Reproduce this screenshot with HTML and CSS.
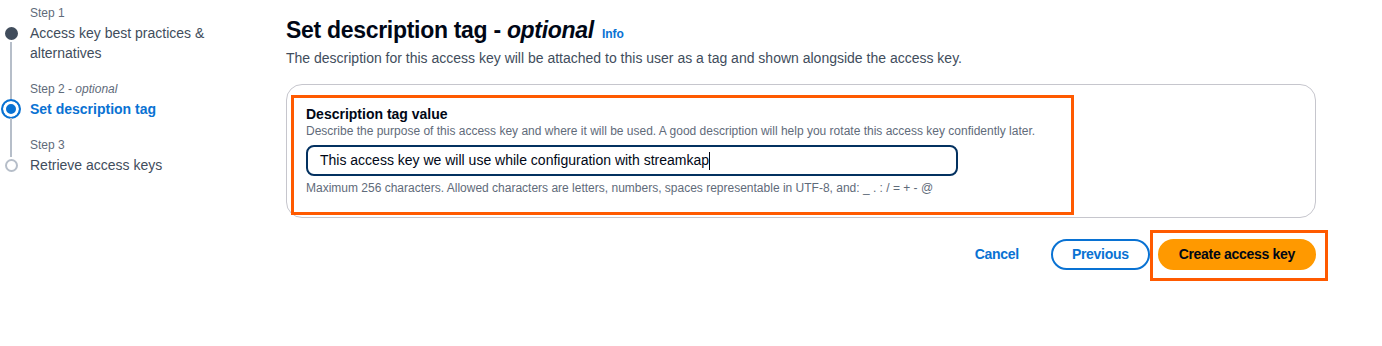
FILE: index.html
```html
<!DOCTYPE html>
<html lang="en">
<head>
  <meta charset="UTF-8" />
  <meta name="viewport" content="width=device-width, initial-scale=1.0"/>
  <title>Create access key</title>
  <link rel="stylesheet" href="styles.css">
</head>
<body>

  <div class="layout">
    <!-- Wizard steps -->
    <nav class="steps">
      <div class="step done">
        <div class="step-label">Step 1</div>
        <span class="marker"></span>
        <div class="step-title">Access key best practices &amp; alternatives</div>
      </div>
      <div class="step active">
        <div class="step-label">Step 2 - <i>optional</i></div>
        <span class="marker"></span>
        <div class="step-title">Set description tag</div>
      </div>
      <div class="step">
        <div class="step-label">Step 3</div>
        <span class="marker"></span>
        <div class="step-title">Retrieve access keys</div>
      </div>
    </nav>

    <main class="content">
      <h1 class="page-title">
        <span>Set description tag - <i>optional</i></span>
        <a href="#" class="info">Info</a>
      </h1>
      <p class="page-desc">The description for this access key will be attached to this user as a tag and shown alongside the access key.</p>

      <div class="card">
        <div class="field highlight">
          <label class="field-label">Description tag value</label>
          <div class="field-desc">Describe the purpose of this access key and where it will be used. A good description will help you rotate this access key confidently later.</div>
          <div class="input">This access key we will use while configuration with streamkap<span class="caret"></span></div>
          <div class="field-hint">Maximum 256 characters. Allowed characters are letters, numbers, spaces representable in UTF-8, and: _ . : / = + - @</div>
        </div>
      </div>

      <div class="actions">
        <button class="btn btn-link">Cancel</button>
        <button class="btn btn-normal">Previous</button>
        <span class="mark">
          <button class="btn btn-primary">Create access key</button>
        </span>
      </div>
    </main>
  </div>

</body>
</html>
```

FILE: styles.css
```css
html, body {
  min-height: 100%;
}

body {
  margin: 0;
  min-height: 100vh;
  font-family: 'Liberation Sans', Arial, sans-serif;
  color: #000716;
  background: #fff;
}

.layout {
  display: flex;
  align-items: flex-start;
  padding-bottom: 40px;
}

/* steps */
.steps {
  width: 281px;
  padding: 5px 0 0 5px;
  display: flex;
  flex-direction: column;
  gap: 18px;
}

.step {
  position: relative;
  display: grid;
  grid-template-columns: 25px 1fr;
  row-gap: 2px;
}

.step-label {
  grid-column: 2;
  font-size: 12px;
  line-height: 16px;
  color: #5f6b7a;
}

.step-title {
  grid-column: 2;
  font-size: 14px;
  line-height: 20px;
  color: #414d5c;
  width: 190px;
}

.marker {
  grid-column: 1;
  grid-row: 2;
  justify-self: start;
  margin-top: 4px;
  width: 13px;
  height: 13px;
  box-sizing: border-box;
  border-radius: 50%;
  border: 2px solid #b6bec9;
  background: #fff;
}

.step.done .marker {
  border-color: #414d5c;
  background: #414d5c;
}

.step.active .marker {
  margin-top: 0;
  margin-left: -4px;
  width: 20px;
  height: 20px;
  border: 2px solid #0972d3;
  background: #0972d3;
  box-shadow: inset 0 0 0 3px #fff;
}

.step.active .step-title {
  color: #0972d3;
  font-weight: bold;
}

.step:not(:last-child)::after {
  content: '';
  position: absolute;
  left: 5px;
  top: 37px;
  bottom: -38px;
  width: 2px;
  background: #b6bec9;
}

/* main */
.content {
  width: 1030px;
}

.page-title {
  margin: 15px 0 0;
  display: flex;
  align-items: baseline;
  gap: 8px;
  font-size: 23px;
  line-height: 30px;
  font-weight: bold;
  letter-spacing: -0.3px;
}

.info {
  font-size: 12px;
  line-height: 16px;
  font-weight: bold;
  color: #0972d3;
  text-decoration: none;
  letter-spacing: 0;
}

.page-desc {
  margin: 3px 0 0;
  font-size: 14px;
  line-height: 20px;
  color: #414d5c;
}

.card {
  margin-top: 16px;
  border: 1px solid #c6c6cd;
  border-radius: 16px;
  padding: 10px 4px 2px;
}

.field {
  width: 753px;
  padding: 7px 12px 16px;
}

.highlight {
  border: 3px solid #ff5a00;
}

.field-label {
  display: block;
  font-size: 14px;
  line-height: 18px;
  font-weight: bold;
}

.field-desc,
.field-hint {
  font-size: 12px;
  line-height: 16px;
  color: #5f6b7a;
}

.input {
  margin-top: 6px;
  width: 624px;
  height: 27px;
  padding: 0 12px;
  border: 2px solid #033160;
  border-radius: 8px;
  font-size: 14px;
  line-height: 27px;
  display: flex;
  align-items: center;
}

.caret {
  display: inline-block;
  width: 1px;
  height: 18px;
  background: #000716;
}

.field-hint {
  margin-top: 4px;
}

.actions {
  display: flex;
  justify-content: flex-end;
  align-items: center;
  gap: 8px;
  margin-top: 21px;
  padding-right: 0;
}

.btn {
  font-family: inherit;
  font-size: 14px;
  line-height: 23px;
  font-weight: bold;
  letter-spacing: -0.3px;
  padding: 2px 20px;
  border: 2px solid transparent;
  border-radius: 20px;
  cursor: pointer;
  background: none;
}

.btn-link {
  color: #0972d3;
  margin-right: 2px;
}

.btn-normal {
  color: #0972d3;
  border-color: #0972d3;
  background: #fff;
  padding: 2px 19px;
}

.btn-primary {
  color: #000716;
  background: #ff9900;
  border-color: #ff9900;
  padding: 2px 19px;
}

/* orange annotation frame around the primary button */
.mark {
  display: flex;
  margin: -9px -12px -11px -8px;
  padding: 6px 9px 8px 5px;
  border: 3px solid #ff5a00;
}
```
